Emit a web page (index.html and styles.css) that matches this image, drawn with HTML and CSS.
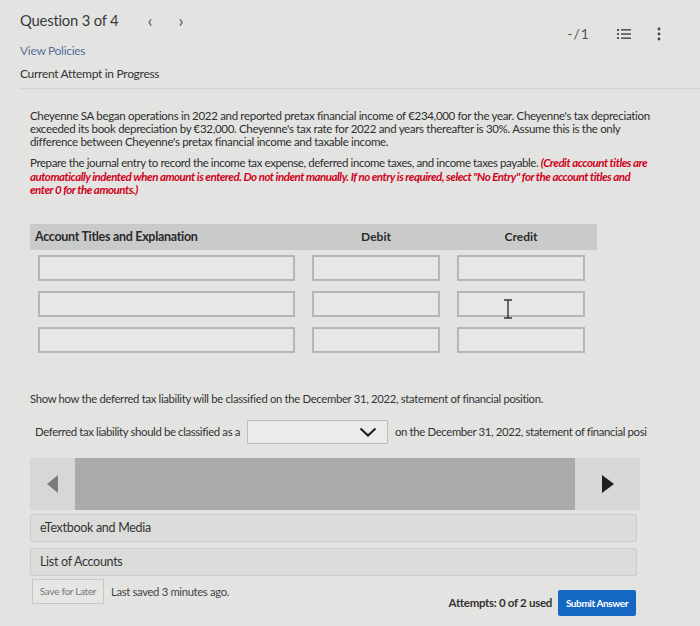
FILE: index.html
```html
<!DOCTYPE html>
<html lang="en">
<head>
    <meta charset="UTF-8">
    <meta name="viewport" content="width=device-width, initial-scale=1.0">
    <title>Question 3 of 4</title>
    <link rel="stylesheet" href="styles.css">
</head>
<body>
    <div class="page">
        <header class="top-bar">
            <div class="question-nav">
                <span class="question-title">Question 3 of 4</span>
                <span class="nav-arrow">&lsaquo;</span>
                <span class="nav-arrow">&rsaquo;</span>
            </div>
            <div class="top-tools">
                <span class="score">-/1</span>
                <svg class="tool-icon" width="16" height="14" viewBox="0 0 16 14">
                    <rect x="1" y="2" width="2" height="2" fill="#555"/>
                    <rect x="1" y="6" width="2" height="2" fill="#555"/>
                    <rect x="1" y="10" width="2" height="2" fill="#555"/>
                    <rect x="5" y="2" width="10" height="1.6" fill="#555"/>
                    <rect x="5" y="6.2" width="10" height="1.6" fill="#555"/>
                    <rect x="5" y="10.4" width="10" height="1.6" fill="#555"/>
                </svg>
                <svg class="tool-icon" width="6" height="14" viewBox="0 0 6 14">
                    <circle cx="3" cy="2" r="1.4" fill="#444"/>
                    <circle cx="3" cy="7" r="1.4" fill="#444"/>
                    <circle cx="3" cy="12" r="1.4" fill="#444"/>
                </svg>
            </div>
        </header>

        <a class="policies" href="#">View Policies</a>
        <div class="attempt">Current Attempt in Progress</div>

        <div class="question">
            <p class="intro">
                Cheyenne SA began operations in 2022 and reported pretax financial income of €234,000 for the year. Cheyenne's tax depreciation
                exceeded its book depreciation by €32,000. Cheyenne's tax rate for 2022 and years thereafter is 30%. Assume this is the only
                difference between Cheyenne's pretax financial income and taxable income.
            </p>

            <p class="instructions">
                Prepare the journal entry to record the income tax expense, deferred income taxes, and income taxes payable.
                <em class="hint">(Credit account titles are automatically indented when amount is entered. Do not indent manually. If no entry is required, select "No Entry" for the account titles and enter 0 for the amounts.)</em>
            </p>

            <div class="journal">
                <div class="journal-head">
                    <div class="col-title">Account Titles and Explanation</div>
                    <div class="col-amount">Debit</div>
                    <div class="col-amount">Credit</div>
                </div>
                <div class="journal-row">
                    <input class="field" type="text">
                    <input class="field" type="text">
                    <input class="field" type="text">
                </div>
                <div class="journal-row">
                    <input class="field" type="text">
                    <input class="field" type="text">
                    <div class="cursor-cell">
                        <input class="field" type="text">
                        <svg class="ibeam" width="10" height="20" viewBox="0 0 10 20">
                            <path d="M1 1h8M1 19h8M5 1v18" stroke="#333" stroke-width="1.4" fill="none"/>
                        </svg>
                    </div>
                </div>
                <div class="journal-row">
                    <input class="field" type="text">
                    <input class="field" type="text">
                    <input class="field" type="text">
                </div>
            </div>

            <p class="show-how">Show how the deferred tax liability will be classified on the December 31, 2022, statement of financial position.</p>

            <div class="classify">
                <span>Deferred tax liability should be classified as a</span>
                <div class="select">
                    <svg width="18" height="10" viewBox="0 0 18 10">
                        <path d="M1.5 1.5l7.5 7 7.5-7" stroke="#222" stroke-width="2.2" fill="none"/>
                    </svg>
                </div>
                <span>on the December 31, 2022, statement of financial posi</span>
            </div>

            <div class="carousel">
                <div class="arrow arrow-left"></div>
                <div class="carousel-track"></div>
                <div class="arrow arrow-right"></div>
            </div>

            <div class="panel">eTextbook and Media</div>
            <div class="panel">List of Accounts</div>

            <div class="footer">
                <div class="footer-left">
                    <button class="save-btn">Save for Later</button>
                    <span class="saved">Last saved 3 minutes ago.</span>
                </div>
                <div class="footer-right">
                    <span class="attempts">Attempts: 0 of 2 used</span>
                    <button class="submit-btn">Submit Answer</button>
                </div>
            </div>
        </div>
    </div>
</body>
</html>
```

FILE: styles.css
```css
* {
    margin: 0;
    padding: 0;
    box-sizing: border-box;
}

body {
    font-family: Lato, "Liberation Sans", sans-serif;
    background: #e3e4e2;
    color: #333;
}

.page {
    width: 700px;
    height: 626px;
    overflow: hidden;
    padding: 0 0 0 20px;
}

.top-bar {
    display: flex;
    justify-content: space-between;
    align-items: flex-start;
    padding: 10px 38px 0 0;
    height: 43px;
}

.question-nav {
    display: flex;
    align-items: center;
    gap: 26px;
}

.question-title {
    font-size: 14.8px;
    line-height: 20px;
    color: #3a3a3a;
    letter-spacing: -0.2px;
    margin-right: 3px;
}

.nav-arrow {
    font-size: 18px;
    line-height: 20px;
    color: #555;
}

.top-tools {
    display: flex;
    align-items: center;
    margin-top: 15px;
}

.score {
    font-size: 14px;
    color: #555;
    margin-right: 26px;
    letter-spacing: 1px;
}

.tool-icon {
    display: block;
    margin-right: 24px;
}

.tool-icon:last-child {
    margin-right: 0;
}

.policies {
    display: block;
    font-size: 12px;
    line-height: 16px;
    color: #5b6f98;
    text-decoration: none;
    letter-spacing: -0.3px;
}

.attempt {
    font-size: 12px;
    line-height: 16px;
    margin-top: 7px;
    color: #333;
    letter-spacing: -0.3px;
    padding-bottom: 6px;
    border-bottom: 1px solid #d2d3d1;
}

.question {
    padding: 20px 0 0 10px;
}

.intro,
.instructions {
    font-size: 11.5px;
    line-height: 13px;
    letter-spacing: -0.32px;
    width: 625px;
    color: #2e2e2e;
}

.instructions {
    margin-top: 8px;
    line-height: 13.5px;
    letter-spacing: -0.4px;
    width: 622px;
}

.hint {
    color: #d0021b;
    font-weight: bold;
    font-style: italic;
    letter-spacing: -0.48px;
}

.journal {
    width: 567px;
    margin-top: 27px;
}

.journal-head,
.journal-row {
    display: grid;
    grid-template-columns: 257px 128px 128px;
    column-gap: 17px;
    padding: 0 12px 0 8px;
}

.journal-head {
    background: #c9cbca;
    height: 26px;
    align-items: center;
    padding-left: 5px;
    grid-template-columns: 260px 128px 128px;
}

.col-title {
    font-size: 12.5px;
    font-weight: bold;
    letter-spacing: -0.3px;
    color: #2a2a2a;
}

.col-amount {
    font-size: 12px;
    font-weight: bold;
    text-align: center;
    color: #2a2a2a;
}

.journal-row {
    margin-top: 10px;
}

.journal-head + .journal-row {
    margin-top: 5px;
}

.field {
    display: block;
    width: 100%;
    height: 26px;
    border: 2px solid #b6b7b5;
    background: #e7e8e6;
}

.cursor-cell {
    position: relative;
}

.ibeam {
    position: absolute;
    left: 46px;
    top: 8px;
}

.show-how {
    font-size: 11.3px;
    letter-spacing: -0.32px;
    margin-top: 39px;
    line-height: 14px;
}

.classify {
    display: flex;
    align-items: center;
    margin-top: 14px;
    padding-left: 5px;
    font-size: 11.4px;
    letter-spacing: -0.38px;
    white-space: nowrap;
}

.select {
    width: 141px;
    height: 24px;
    border: 1.5px solid #bdbebc;
    background: #ebecea;
    margin: 0 7px 0 7px;
    display: flex;
    align-items: center;
    justify-content: flex-end;
    padding-right: 10px;
}

.carousel {
    display: flex;
    align-items: stretch;
    width: 610px;
    height: 52px;
    background: #d7d8d6;
    margin-top: 14px;
}

.carousel-track {
    flex: 1;
    background: #a9abaa;
}

.arrow {
    width: 45px;
    display: flex;
    align-items: center;
    justify-content: center;
}

.arrow::before {
    content: "";
    border-top: 9px solid transparent;
    border-bottom: 9px solid transparent;
}

.arrow-left::before {
    border-right: 11px solid #7b7c7b;
}

.arrow-right {
    width: 65px;
}

.arrow-right::before {
    border-left: 12px solid #1f1f1f;
}

.panel {
    width: 607px;
    height: 28px;
    background: #dcdddb;
    border: 1.5px solid #cbccca;
    border-radius: 2px;
    margin-top: 4px;
    font-size: 12.5px;
    line-height: 25px;
    padding-left: 9px;
    letter-spacing: -0.3px;
    color: #333;
}

.panel + .panel {
    margin-top: 6px;
}

.footer {
    display: flex;
    justify-content: space-between;
    align-items: flex-start;
    width: 606px;
    margin-top: 3px;
}

.footer-left,
.footer-right {
    display: flex;
    align-items: center;
}

.footer-right {
    margin-top: 11px;
}

.save-btn {
    font-family: inherit;
    font-size: 10px;
    color: #777;
    background: #e6e7e5;
    border: 1.5px solid #c7c8c6;
    height: 25px;
    width: 72px;
    padding: 0;
    margin-left: 2px;
    letter-spacing: -0.3px;
}

.saved {
    font-size: 11.3px;
    margin-left: 7px;
    letter-spacing: -0.35px;
    color: #444;
}

.attempts {
    font-size: 11.5px;
    font-weight: bold;
    color: #333;
    letter-spacing: -0.3px;
    margin-right: 6px;
}

.submit-btn {
    font-family: inherit;
    font-size: 10px;
    font-weight: bold;
    color: #fff;
    background: #1467c2;
    border: none;
    border-radius: 2px;
    height: 26px;
    width: 78px;
    letter-spacing: -0.4px;
}
```
